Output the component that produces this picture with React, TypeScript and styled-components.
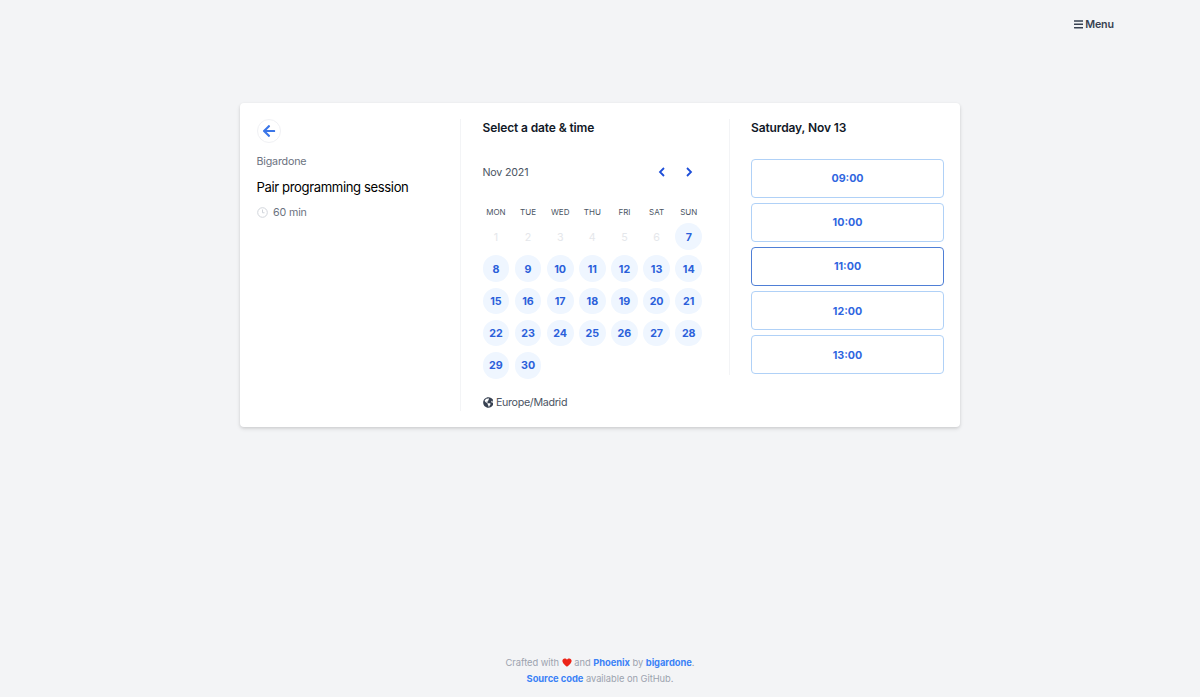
import React from 'react';
import styled, { createGlobalStyle } from 'styled-components';
import { FaArrowLeft, FaBars, FaGlobeAmericas } from 'react-icons/fa';

const GlobalStyle = createGlobalStyle`
  * {
    box-sizing: border-box;
  }

  body {
    margin: 0;
    background-color: #f3f4f6;
    font-family: Inter, sans-serif;
    color: #111827;
  }

  button {
    font-family: inherit;
    padding: 0;
    cursor: pointer;
  }
`;

const Page = styled.div`
  min-height: 697px;
  display: flex;
  flex-direction: column;
`;

const Header = styled.header`
  height: 48px;
  padding: 0 86px;
  display: flex;
  justify-content: flex-end;
  align-items: center;
`;

const MenuLink = styled.a`
  display: flex;
  align-items: center;
  gap: 2px;
  font-size: 10.7px;
  font-weight: 600;
  letter-spacing: -0.1px;
  color: #374151;

  svg {
    width: 9.3px;
  }
`;

const Main = styled.main`
  flex: 1;
  padding-top: 54.6px;
`;

const Card = styled.div`
  width: 720px;
  height: 324px;
  margin: 0 auto;
  padding: 16px 16px 16px 16.5px;
  display: flex;
  align-items: flex-start;
  background-color: white;
  border-radius: 4px;
  box-shadow: 0 2px 4px rgba(0, 0, 0, 0.1), 0 1px 3px rgba(0, 0, 0, 0.08);
`;

const Info = styled.section`
  width: 204.5px;
  height: 292px;
  border-right: 1px solid #f3f4f6;
`;

const BackButton = styled.button`
  width: 24px;
  height: 24px;
  display: flex;
  align-items: center;
  justify-content: center;
  border: 1px solid #f0f1f4;
  border-radius: 50%;
  background: white;
  color: #3b76e8;
  font-size: 14px;
`;

const Owner = styled.div`
  margin-top: 10.8px;
  font-size: 10.7px;
  line-height: 17px;
  letter-spacing: -0.18px;
  color: #6b7280;
`;

const EventName = styled.h2`
  margin: 8px 0 0;
  font-size: 13.1px;
  line-height: 18px;
  font-weight: 400;
  letter-spacing: -0.38px;
  color: #000;
`;

const Duration = styled.div`
  margin-top: 7.5px;
  display: flex;
  align-items: center;
  gap: 5.5px;
  font-size: 10.7px;
  line-height: 17px;
  letter-spacing: -0.15px;
  color: #6b7280;

  svg {
    color: #d1d5db;
  }
`;

const Calendar = styled.section`
  width: 269px;
  height: 256px;
  padding-left: 21.5px;
  border-right: 1px solid #f3f4f6;
`;

const Title = styled.h3`
  margin: 0;
  font-size: 12px;
  line-height: 18px;
  font-weight: 600;
  letter-spacing: -0.12px;
`;

const MonthBar = styled.div`
  width: 220px;
  height: 27px;
  margin-top: 22.2px;
  display: flex;
  align-items: center;
  justify-content: space-between;
  font-size: 10.7px;
  letter-spacing: -0.2px;
  color: #4b5563;
`;

const MonthNav = styled.div`
  display: flex;
`;

const NavButton = styled.button`
  width: 26.8px;
  height: 26.8px;
  display: flex;
  align-items: center;
  justify-content: center;
  border: 0;
  background: none;
  color: #1d4ed8;
`;

const Grid = styled.div`
  display: grid;
  grid-template-columns: repeat(7, 26.8px);
  column-gap: 5.35px;
  row-gap: 5.3px;
`;

const WeekDays = styled(Grid)`
  margin-top: 20px;
  height: 13px;
`;

const WeekDay = styled.div`
  font-size: 8px;
  line-height: 13px;
  text-align: center;
  color: #4b5563;
`;

const Days = styled(Grid)`
  margin-top: 4.6px;
`;

const Day = styled.button<{ $past?: boolean }>`
  height: 26.8px;
  padding-top: 1px;
  border: 0;
  border-radius: 50%;
  background-color: ${({ $past }) => ($past ? 'transparent' : '#eff6ff')};
  color: ${({ $past }) => ($past ? '#e5e7eb' : '#2b60da')};
  font-size: 10.7px;
  font-weight: ${({ $past }) => ($past ? 400 : 700)};
`;

const TimeZone = styled.div`
  margin-top: 15.4px;
  display: flex;
  align-items: center;
  gap: 2.5px;
  font-size: 10.7px;
  line-height: 17px;
  letter-spacing: -0.3px;
  color: #4b5563;

  svg {
    font-size: 10.9px;
    color: #374151;
  }
`;

const Schedule = styled.section`
  flex: 1;
  padding-left: 21px;
`;

const Slots = styled.div`
  margin-top: 22px;
  display: flex;
  flex-direction: column;
  gap: 5.15px;
`;

const Slot = styled.button<{ $active?: boolean }>`
  height: 39px;
  padding-top: 1px;
  border: 1px solid ${({ $active }) => ($active ? '#4f7fd6' : '#b0d1f7')};
  border-radius: 4px;
  background: white;
  color: #2f66e0;
  font-size: 10.7px;
  font-weight: 700;
`;

const Footer = styled.footer`
  padding-bottom: 10.4px;
  text-align: center;
  font-size: 9.35px;
  line-height: 16px;
  letter-spacing: -0.04px;
  color: #9ca3af;

  a {
    font-weight: 700;
    color: #3b82f6;
  }

  svg {
    vertical-align: -1px;
  }
`;

const weekDays = ['MON', 'TUE', 'WED', 'THU', 'FRI', 'SAT', 'SUN'];
const days = Array.from({ length: 30 }, (_, i) => i + 1);
const slots = ['09:00', '10:00', '11:00', '12:00', '13:00'];

const ClockIcon = () => (
  <svg width="11" height="11" viewBox="0 0 22 22" fill="none" stroke="currentColor" strokeWidth="2">
    <circle cx="11" cy="11" r="9.6" />
    <path d="M11 5v6.5h4" />
  </svg>
);

const Chevron: React.FC<{ next?: boolean }> = ({ next }) => (
  <svg width="8" height="10" viewBox="0 0 8 10" fill="none" stroke="currentColor" strokeWidth="1.8">
    <path d={next ? 'M2 1l4 4-4 4' : 'M6 1L2 5l4 4'} />
  </svg>
);

const Heart = () => (
  <svg width="10" height="9" viewBox="0 0 20 18">
    <path
      d="M10 17.500C7 15.500.8 10.500.8 5.600.8 2.800 2.800.8 5.300.8 7.500.8 9.200 1.800 10 3.400c.8-1.600 2.500-2.600 4.700-2.600 2.500 0 4.500 2 4.500 4.800C19.200 10.500 13 15.500 10 17.500z"
      fill="#ec2418"
    />
  </svg>
);

const App: React.FC = () => {
  return (
    <Page>
      <GlobalStyle />
      <Header>
        <MenuLink>
          <FaBars />
          Menu
        </MenuLink>
      </Header>
      <Main>
        <Card>
          <Info>
            <BackButton>
              <FaArrowLeft />
            </BackButton>
            <Owner>Bigardone</Owner>
            <EventName>Pair programming session</EventName>
            <Duration>
              <ClockIcon />
              60 min
            </Duration>
          </Info>
          <Calendar>
            <Title>Select a date &amp; time</Title>
            <MonthBar>
              Nov 2021
              <MonthNav>
                <NavButton>
                  <Chevron />
                </NavButton>
                <NavButton>
                  <Chevron next />
                </NavButton>
              </MonthNav>
            </MonthBar>
            <WeekDays>
              {weekDays.map(day => (
                <WeekDay key={day}>{day}</WeekDay>
              ))}
            </WeekDays>
            <Days>
              {days.map(day => (
                <Day key={day} $past={day < 7}>{day}</Day>
              ))}
            </Days>
            <TimeZone>
              <FaGlobeAmericas />
              Europe/Madrid
            </TimeZone>
          </Calendar>
          <Schedule>
            <Title>Saturday, Nov 13</Title>
            <Slots>
              {slots.map(slot => (
                <Slot key={slot} $active={slot === '11:00'}>{slot}</Slot>
              ))}
            </Slots>
          </Schedule>
        </Card>
      </Main>
      <Footer>
        <div>
          Crafted with <Heart /> and <a>Phoenix</a> by <a>bigardone</a>.
        </div>
        <div>
          <a>Source code</a> available on GitHub.
        </div>
      </Footer>
    </Page>
  );
};

export default App;
